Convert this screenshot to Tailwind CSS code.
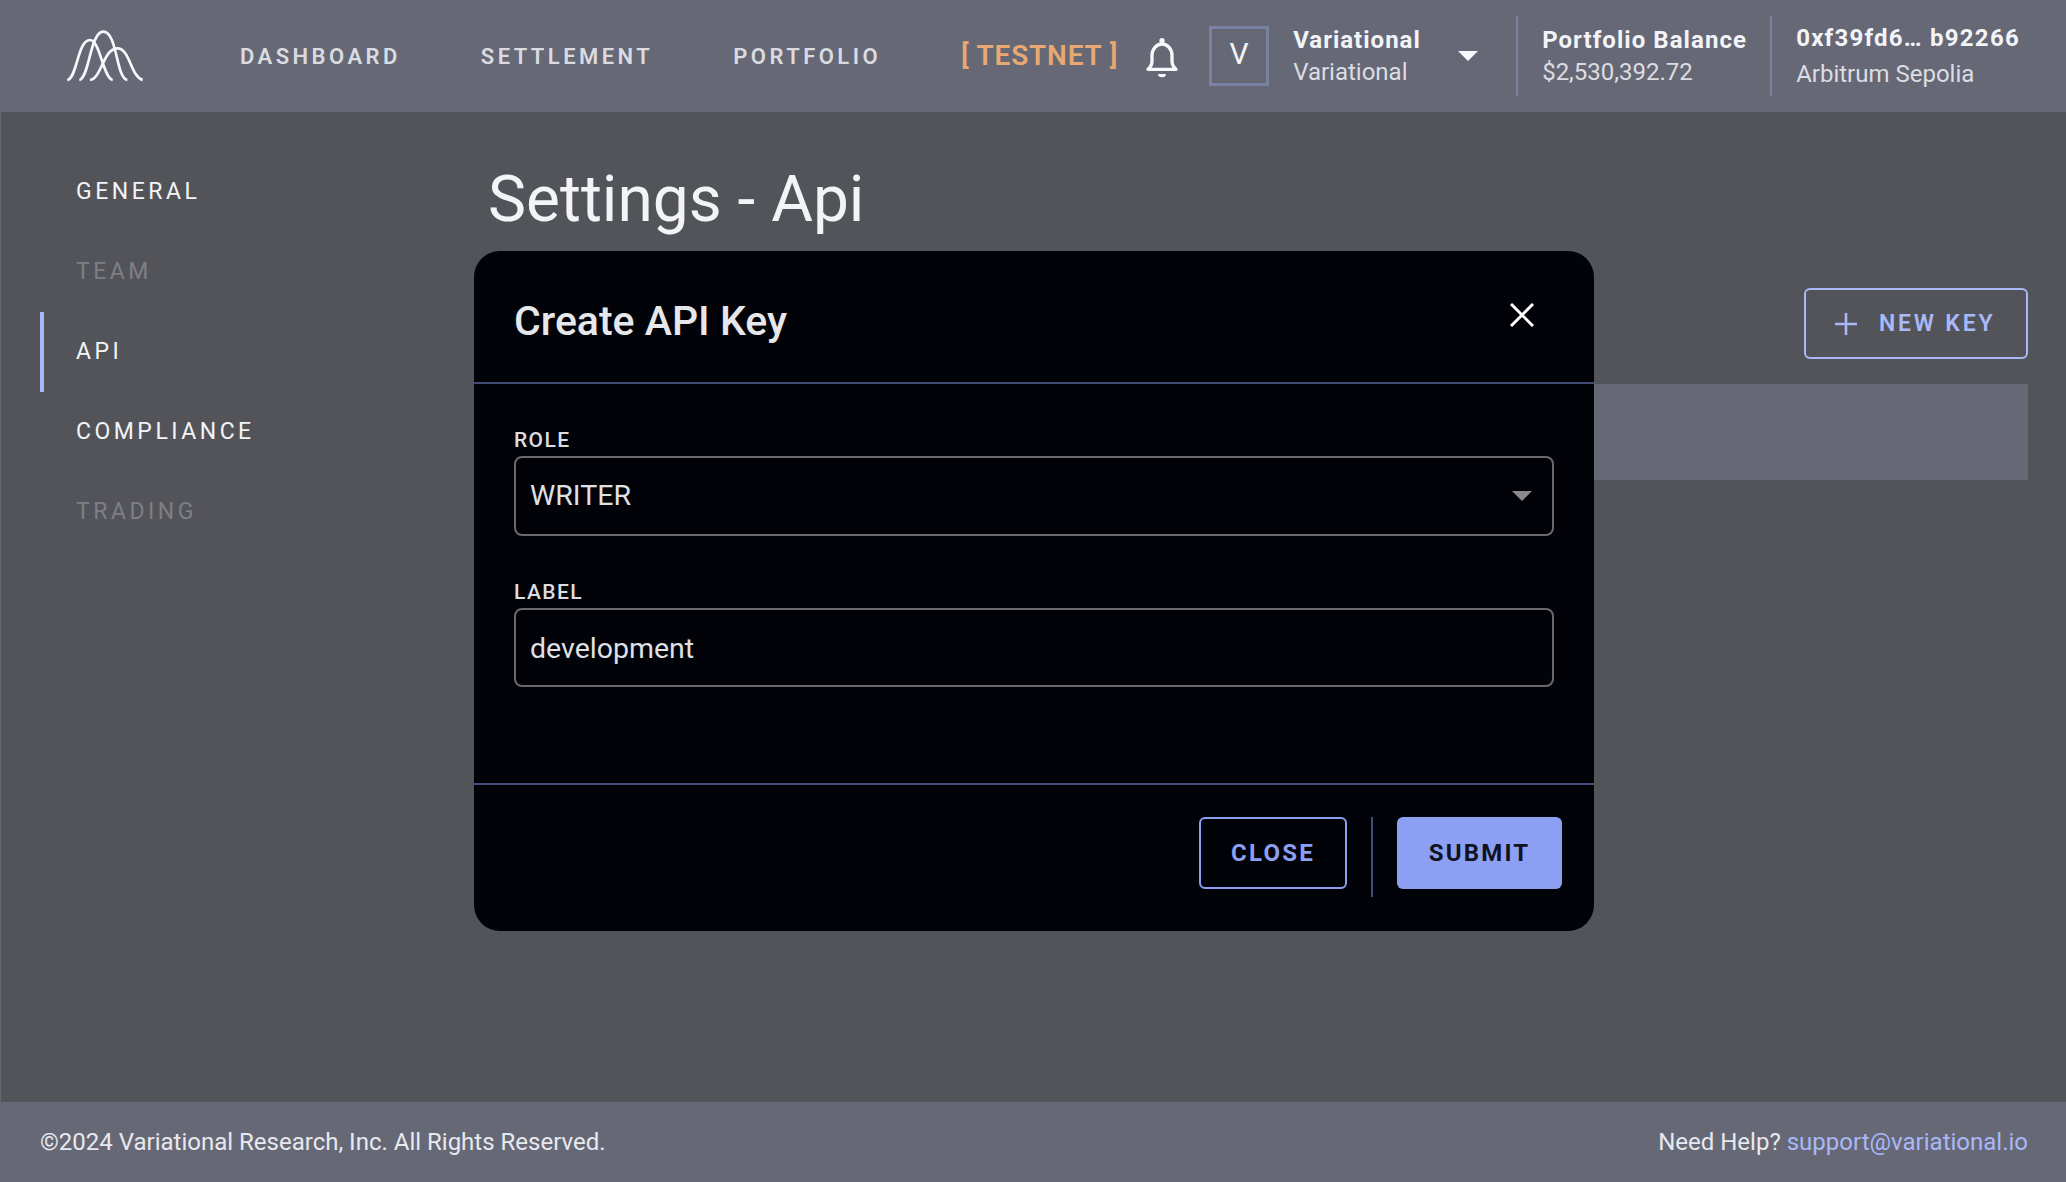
<!doctype html>
<html lang="en">

<head>
	<title>Settings - Api</title>
	<meta charset="utf-8">
	<script src="https://cdn.jsdelivr.net/npm/@tailwindcss/browser@4"></script>
</head>

<body class="bg-[#53545a] font-['Roboto',sans-serif] text-[#f3f4f8]">
	<div class="relative flex flex-col w-[2066px] h-[1182px] overflow-hidden">

		<!-- top bar -->
		<header class="flex items-center h-[112px] shrink-0 bg-[#666875] pl-[67px]">
			<svg class="w-[130px] h-[80px] -ml-[27px] -mt-[2px] shrink-0" viewBox="0 0 390 240" fill="none" stroke="#f7f8fb" stroke-width="8">
				<path d="M82 195C112 190 112 75 150 75C180 75 190 190 218 195" />
				<path d="M118 195C148 190 150 50 190 50C232 50 228 190 262 195" />
				<path d="M150 195C185 190 190 100 232 100C270 100 272 185 308 195" />
			</svg>
			<nav class="flex items-center gap-[80px] ml-[70px] text-[22px] font-semibold tracking-[3.45px] text-[#d9dbe1]">
				<a>DASHBOARD</a>
				<a>SETTLEMENT</a>
				<a>PORTFOLIO</a>
				<span class="text-[#e8a872] text-[28px] tracking-[0.8px]">[ TESTNET ]</span>
			</nav>
			<svg class="w-[50px] h-[60px] ml-[19px] shrink-0" viewBox="45 30 150 180" fill="none" stroke="#f7f8fb" stroke-width="10">
				<path d="M78 160Q90 150 90 135V118A30 34 0 0 1 150 118V135Q150 150 162 160Z" stroke-linejoin="round" />
				<circle cx="120" cy="74" r="8" fill="#f7f8fb" stroke="none" />
				<path d="M108 174H132A12 10 0 0 1 108 174Z" fill="#f7f8fb" stroke="none" />
			</svg>
			<div class="flex items-center justify-center w-[60px] h-[60px] ml-[22px] shrink-0 border-[3px] border-[#7a81a2] text-[30px] pb-[6px]">V</div>
			<div class="flex flex-col w-[165px] ml-[24px] shrink-0">
				<span class="text-[24px] leading-[32px] font-bold tracking-[1px]">Variational</span>
				<span class="text-[24px] leading-[32px] text-[#dcdde2]">Variational</span>
			</div>
			<div class="w-0 h-0 shrink-0 border-x-[10px] border-x-transparent border-t-[10px] border-t-[#f7f8fb]"></div>
			<div class="flex flex-col justify-center h-[80px] ml-[38px] pl-[24px] w-[254px] shrink-0 border-l-2 border-[#7a81a2]">
				<span class="text-[24px] leading-[32px] font-bold tracking-[1.05px]">Portfolio Balance</span>
				<span class="text-[24px] leading-[32px] text-[#dcdde2]">$2,530,392.72</span>
			</div>
			<div class="flex flex-col justify-center gap-[4px] h-[80px] pl-[24px] shrink-0 border-l-2 border-[#7a81a2]">
				<span class="text-[24px] leading-[32px] font-bold tracking-[1.25px]">0xf39fd6… b92266</span>
				<span class="text-[24px] leading-[32px] text-[#dcdde2]">Arbitrum Sepolia</span>
			</div>
		</header>

		<!-- page body -->
		<div class="flex flex-1 border-l-[1px] border-[#66676e]">
			<aside class="w-[449px] shrink-0 pt-[40px] pl-[39px] text-[23px] tracking-[3.5px]">
				<a class="flex items-center h-[80px] pl-[36px]">GENERAL</a>
				<a class="flex items-center h-[80px] pl-[36px] text-[#7e7f85]">TEAM</a>
				<a class="flex items-center h-[80px] pl-[32px] border-l-4 border-[#a9b8f7]">API</a>
				<a class="flex items-center h-[80px] pl-[36px]">COMPLIANCE</a>
				<a class="flex items-center h-[80px] pl-[36px] text-[#7e7f85]">TRADING</a>
			</aside>
			<main class="flex-1 pl-[38px] pr-[38px]">
				<h1 class="mt-[50px] text-[64px] leading-[76px]">Settings - Api</h1>
				<div class="flex justify-end mt-[50px]">
					<button class="flex items-center gap-[21px] w-[224px] h-[71px] pl-[28px] rounded-[6px] border-2 border-[#a9b8f7] text-[#a9b8f7] text-[23px] font-semibold tracking-[2.8px]">
						<svg class="w-[24px] h-[24px]" viewBox="0 0 24 24" fill="none" stroke="#a9b8f7" stroke-width="2.6"><path d="M12 1V23M1 12H23" /></svg>
						<span class="pt-[2px]">NEW KEY</span>
					</button>
				</div>
				<div class="h-[96px] mt-[25px] bg-[#666875]"></div>
			</main>
		</div>

		<footer class="flex items-center justify-between h-[80px] shrink-0 bg-[#666875] pl-[40px] pr-[38px] text-[24px] text-[#e8e9ee]">
			<span>©2024 Variational Research, Inc. All Rights Reserved.</span>
			<span>Need Help? <a class="text-[#a9b8f7]">support@variational.io</a></span>
		</footer>

		<!-- modal -->
		<div class="absolute left-[474px] top-[251px] flex flex-col w-[1120px] h-[680px] rounded-[26px] bg-[#020308]">
			<div class="relative flex items-center h-[133px] px-[40px] border-b-2 border-[#414c78]">
				<h2 class="pt-[10px] text-[41px] font-medium text-[#e6e7ea]">Create API Key</h2>
				<svg class="absolute left-[1036px] top-[52px] w-[24px] h-[24px]" viewBox="0 0 24 24" fill="none" stroke="#fff" stroke-width="3"><path d="M1 1L23 23M23 1L1 23" /></svg>
			</div>
			<div class="flex-1 px-[40px] pt-[44px]">
				<label class="block text-[21px] leading-[24px] font-medium tracking-[1.4px] text-[#dcdde2]">ROLE</label>
				<div class="flex items-center justify-between h-[80px] mt-[4px] pl-[14px] pr-[20px] rounded-[8px] border-2 border-[#69696c] text-[28.5px] text-[#dfe0e3]">
					WRITER
					<div class="w-0 h-0 border-x-[10px] border-x-transparent border-t-[10px] border-t-[#8a8a8c]"></div>
				</div>
				<label class="block mt-[44px] text-[21px] leading-[24px] font-medium tracking-[1.4px] text-[#dcdde2]">LABEL</label>
				<div class="flex items-center h-[79px] mt-[4px] pl-[14px] pt-[3px] rounded-[8px] border-2 border-[#69696c] text-[28.5px] text-[#dfe0e3]">development</div>
			</div>
			<div class="flex items-start justify-end h-[148px] pt-[32px] pr-[32px] border-t-2 border-[#414c78]">
				<button class="w-[148px] h-[72px] rounded-[6px] border-2 border-[#8c9ff2] text-[#8c9ff2] text-[24px] font-bold tracking-[2.2px]">CLOSE</button>
				<div class="w-[2px] h-[80px] mx-[24px] bg-[#414c78]"></div>
				<button class="w-[165px] h-[72px] rounded-[6px] bg-[#8c9ff2] text-[#10121f] text-[24px] font-bold tracking-[2.2px]">SUBMIT</button>
			</div>
		</div>
	</div>
</body>
</html>
